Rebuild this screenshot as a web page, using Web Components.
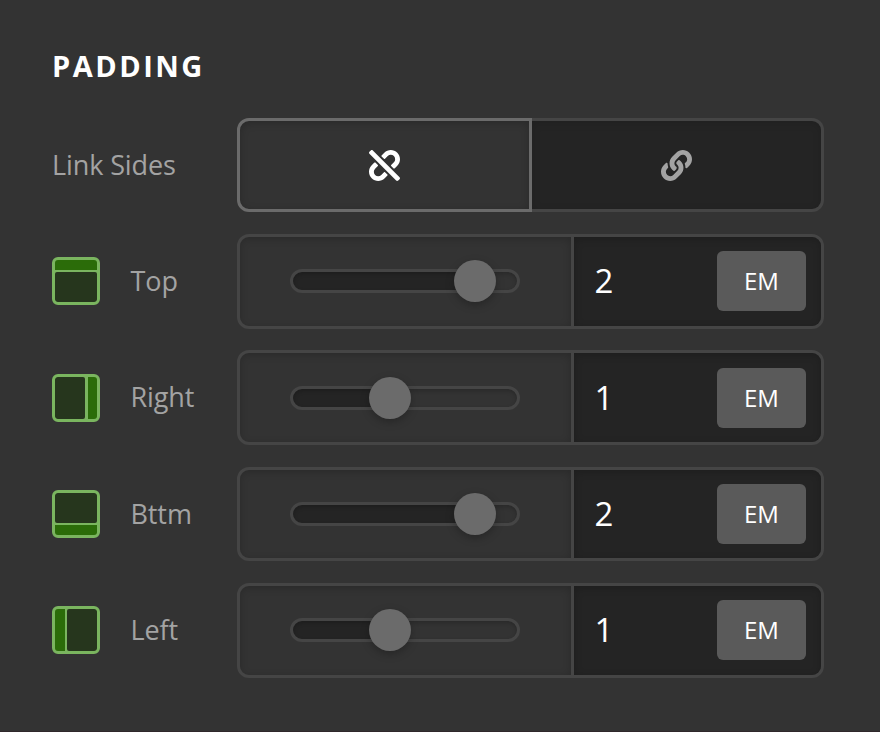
<!DOCTYPE html>
<html lang="en">
<head>
<meta charset="utf-8">
<title>Padding</title>
<style>
    html, body {
        height: 100%;
        margin: 0;
    }

    body {
        background-color: #333333;
        font-family: "Open Sans", "Noto Sans", sans-serif;
    }
</style>
</head>
<body>
<settings-panel heading="PADDING">
    <control-row label="Link Sides">
        <link-toggle></link-toggle>
    </control-row>
    <control-row label="Top">
        <side-icon slot="icon" side="top"></side-icon>
        <unit-slider value="2" unit="EM" percent="81.1"></unit-slider>
    </control-row>
    <control-row label="Right">
        <side-icon slot="icon" side="right"></side-icon>
        <unit-slider value="1" unit="EM" percent="43.4"></unit-slider>
    </control-row>
    <control-row label="Bttm">
        <side-icon slot="icon" side="bottom"></side-icon>
        <unit-slider value="2" unit="EM" percent="81.1"></unit-slider>
    </control-row>
    <control-row label="Left">
        <side-icon slot="icon" side="left"></side-icon>
        <unit-slider value="1" unit="EM" percent="43.4"></unit-slider>
    </control-row>
</settings-panel>

<script>
/**
 * <settings-panel> - dark panel with a heading and a stack of rows
 */
class SettingsPanel extends HTMLElement {
    connectedCallback() {
        this.attachShadow({ mode: 'open' });
        this.shadowRoot.innerHTML = `
            <style>
                :host {
                    display: block;
                    box-sizing: border-box;
                    height: 732px;
                    padding: 45px 56px 0 52px;
                    border-bottom: 1px solid #2f282b;
                }

                h2 {
                    margin: 0 0 31.7px;
                    font-size: 29px;
                    line-height: 41px;
                    font-weight: 700;
                    letter-spacing: 2.5px;
                    color: #ffffff;
                }

                .rows {
                    display: flex;
                    flex-direction: column;
                    gap: 21.5px;
                }
            </style>
            <h2>${this.getAttribute('heading')}</h2>
            <div class="rows"><slot></slot></div>
        `;
    }
}

/**
 * <control-row> - optional icon and label on the left, control on the right
 */
class ControlRow extends HTMLElement {
    connectedCallback() {
        this.attachShadow({ mode: 'open' });
        this.shadowRoot.innerHTML = `
            <style>
                :host {
                    display: grid;
                    grid-template-columns: 185px 587px;
                    height: 94.8px;
                    align-items: stretch;
                }

                .label {
                    display: flex;
                    align-items: center;
                    font-size: 27px;
                    line-height: 38px;
                    letter-spacing: -0.1px;
                    color: #a3a3a3;
                    white-space: nowrap;
                }

                .label span {
                    padding-bottom: 0.5px;
                }

                ::slotted([slot="icon"]) {
                    margin-right: 30.5px;
                }
            </style>
            <div class="label"><slot name="icon"></slot><span>${this.getAttribute('label')}</span></div>
            <slot></slot>
        `;
    }
}

/**
 * <link-toggle> - unlinked (active) / linked
 */
class LinkToggle extends HTMLElement {
    connectedCallback() {
        this.attachShadow({ mode: 'open' });
        this.shadowRoot.innerHTML = `
            <style>
                :host {
                    display: flex;
                }

                .option {
                    box-sizing: border-box;
                    display: flex;
                    align-items: center;
                    justify-content: center;
                    border: 3px solid #454545;
                }

                .option.active {
                    width: 295px;
                    border-color: #6b6b6b;
                    border-radius: 12px 0 0 12px;
                    background-color: #333333;
                    box-shadow: inset 0 2px 8px rgba(0, 0, 0, 0.2);
                    color: #ffffff;
                }

                .option.idle {
                    flex: 1;
                    border-left: 0;
                    border-radius: 0 12px 12px 0;
                    background-color: #242424;
                    box-shadow: inset 0 2px 8px rgba(0, 0, 0, 0.12);
                    color: #a3a3a3;
                }

                svg {
                    width: 31px;
                    height: 31px;
                    fill: currentColor;
                }
            </style>
            <div class="option active">
                <svg viewBox="0 0 512 512"><path d="M304.083 405.907c4.686 4.686 4.686 12.284 0 16.971l-44.674 44.674c-59.263 59.262-155.693 59.266-214.961 0-59.264-59.265-59.264-155.696 0-214.96l44.675-44.675c4.686-4.686 12.284-4.686 16.971 0l39.598 39.598c4.686 4.686 4.686 12.284 0 16.971l-44.675 44.674c-28.072 28.073-28.072 73.75 0 101.823 28.072 28.072 73.75 28.073 101.824 0l44.674-44.675c4.686-4.686 12.284-4.686 16.971 0l39.597 39.599zm-56.568-260.216c4.686 4.686 12.284 4.686 16.971 0l44.674-44.674c28.072-28.075 73.75-28.073 101.824 0 28.072 28.073 28.072 73.75 0 101.823l-44.675 44.674c-4.686 4.686-4.686 12.284 0 16.971l39.598 39.598c4.686 4.686 12.284 4.686 16.971 0l44.675-44.675c59.265-59.265 59.265-155.695 0-214.96-59.266-59.264-155.695-59.264-214.961 0l-44.674 44.674c-4.686 4.686-4.686 12.284 0 16.971l39.597 39.598zm234.828 359.28l22.627-22.627c9.373-9.373 9.373-24.569 0-33.941L63.598 7.029c-9.373-9.373-24.569-9.373-33.941 0L7.029 29.657c-9.373 9.373-9.373 24.569 0 33.941l441.373 441.373c9.373 9.372 24.569 9.372 33.941 0z"/></svg>
            </div>
            <div class="option idle">
                <svg viewBox="0 0 512 512"><path d="M326.612 185.391c59.747 59.809 58.927 155.698.36 214.59-.11.12-.24.25-.36.37l-67.2 67.2c-59.27 59.27-155.699 59.262-214.96 0-59.27-59.26-59.27-155.7 0-214.96l37.106-37.106c9.84-9.84 26.786-3.3 27.294 10.606.648 17.722 3.826 35.527 9.69 52.721 1.986 5.822.567 12.262-3.783 16.612l-13.087 13.087c-28.026 28.026-28.905 73.66-1.155 101.96 28.024 28.579 74.086 28.749 102.325.51l67.2-67.19c28.191-28.191 28.073-73.757 0-101.83-3.701-3.694-7.429-6.564-10.341-8.569a16.037 16.037 0 0 1-6.947-12.606c-.396-10.567 3.348-21.456 11.698-29.806l21.054-21.055c5.521-5.521 14.182-6.199 20.584-1.731a152.482 152.482 0 0 1 20.522 17.197zM467.547 44.449c-59.261-59.262-155.69-59.27-214.96 0l-67.2 67.2c-.12.12-.25.25-.36.37-58.566 58.892-59.387 154.781.36 214.59a152.454 152.454 0 0 0 20.521 17.196c6.402 4.468 15.064 3.789 20.584-1.731l21.054-21.055c8.35-8.35 12.094-19.239 11.698-29.806a16.037 16.037 0 0 0-6.947-12.606c-2.912-2.005-6.64-4.875-10.341-8.569-28.073-28.073-28.191-73.639 0-101.83l67.2-67.19c28.239-28.239 74.3-28.069 102.325.51 27.75 28.3 26.872 73.934-1.155 101.96l-13.087 13.087c-4.35 4.35-5.769 10.79-3.783 16.612 5.864 17.194 9.042 34.999 9.69 52.721.509 13.906 17.454 20.446 27.294 10.606l37.106-37.106c59.271-59.259 59.271-155.699.001-214.959z"/></svg>
            </div>
        `;
    }
}

/**
 * <side-icon> - small green box with one side filled
 */
class SideIcon extends HTMLElement {
    connectedCallback() {
        this.attachShadow({ mode: 'open' });
        this.shadowRoot.innerHTML = `
            <style>
                :host {
                    box-sizing: border-box;
                    display: flex;
                    flex: none;
                    width: 48px;
                    height: 48px;
                    border: 3px solid #7ab55f;
                    border-radius: 6px;
                    background-color: #7ab55f;
                    gap: 2.5px;
                    overflow: hidden;
                }

                :host([side="top"]) { flex-direction: column; }
                :host([side="bottom"]) { flex-direction: column-reverse; }
                :host([side="right"]) { flex-direction: row-reverse; }

                .fill {
                    flex: 0 0 9.5px;
                    background-color: #2b6c09;
                }

                .rest {
                    flex: 1;
                    background-color: #26361d;
                    border-radius: 2px;
                }
            </style>
            <div class="fill"></div>
            <div class="rest"></div>
        `;
    }
}

/**
 * <unit-slider> - slider with a value field and its unit
 */
class UnitSlider extends HTMLElement {
    connectedCallback() {
        this.attachShadow({ mode: 'open' });
        this.shadowRoot.innerHTML = `
            <style>
                :host {
                    box-sizing: border-box;
                    display: flex;
                    border: 3px solid #454545;
                    border-radius: 12px;
                    overflow: hidden;
                }

                .slider {
                    box-sizing: border-box;
                    width: 334px;
                    padding-right: 1px;
                    display: flex;
                    align-items: center;
                    justify-content: center;
                    border-right: 3px solid #454545;
                    box-shadow: inset 0 2px 8px rgba(0, 0, 0, 0.2);
                }

                .track {
                    position: relative;
                    box-sizing: border-box;
                    width: 230px;
                    height: 24px;
                    border: 3px solid #454545;
                    border-radius: 12px;
                    background: linear-gradient(#242424, #242424) 0 0 / ${this.getAttribute('percent')}% 100% no-repeat;
                    box-shadow: inset 0 2px 4px rgba(0, 0, 0, 0.2);
                }

                .knob {
                    position: absolute;
                    top: 50%;
                    left: ${this.getAttribute('percent')}%;
                    width: 42px;
                    height: 42px;
                    border-radius: 50%;
                    background-color: #6b6b6b;
                    box-shadow: 0 3px 8px rgba(0, 0, 0, 0.25);
                    transform: translate(-50%, -50%);
                }

                .field {
                    flex: 1;
                    display: flex;
                    align-items: center;
                    justify-content: space-between;
                    padding: 0 15px 0 20.5px;
                    background-color: #242424;
                    box-shadow: inset 0 2px 8px rgba(0, 0, 0, 0.2);
                }

                .value {
                    font-size: 33px;
                    line-height: 44px;
                    color: #ffffff;
                }

                .unit {
                    box-sizing: border-box;
                    display: flex;
                    align-items: center;
                    justify-content: center;
                    width: 89px;
                    height: 60px;
                    padding-bottom: 1px;
                    border-radius: 6px;
                    background-color: #5a5a5a;
                    font-size: 24px;
                    color: #ffffff;
                }
            </style>
            <div class="slider">
                <div class="track"><div class="knob"></div></div>
            </div>
            <div class="field">
                <span class="value">${this.getAttribute('value')}</span>
                <span class="unit">${this.getAttribute('unit')}</span>
            </div>
        `;
    }
}

customElements.define('settings-panel', SettingsPanel);
customElements.define('control-row', ControlRow);
customElements.define('link-toggle', LinkToggle);
customElements.define('side-icon', SideIcon);
customElements.define('unit-slider', UnitSlider);
</script>
</body>
</html>
